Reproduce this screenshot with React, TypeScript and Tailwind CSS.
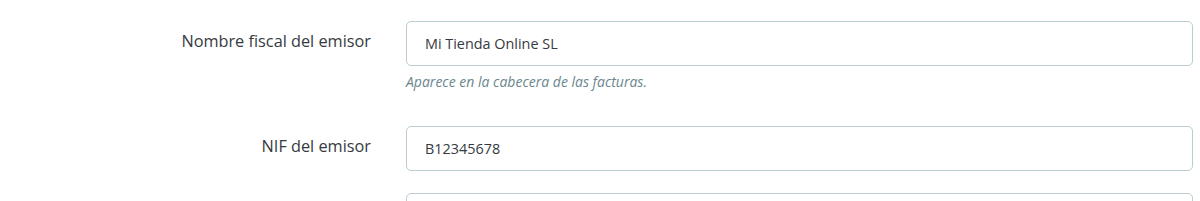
import React from "react";

function Row({ label, value, help }: { label: string; value: string; help?: string }) {
  return (
    <div className="flex items-start">
      <div className="w-[371px] shrink-0 pt-[8px] text-right text-[16.3px] leading-[24px] text-[#363a41]">
        {label}
      </div>
      <div className="ml-[35px] mr-[7px] flex-1">
        <div className="flex h-[45px] items-center rounded-[5px] border border-[#bbcdd2] bg-white pl-[18px] text-[14.4px] text-[#363a41]">
          {value}
        </div>
        {help && (
          <div className="mt-[6px] text-[14px] italic leading-[20px] text-[#6c868e]">{help}</div>
        )}
      </div>
    </div>
  );
}

export default function App() {
  return (
    <div
      className="h-[201px] w-[1200px] overflow-hidden bg-white pt-[21px]"
      style={{ fontFamily: '"Open Sans", "Noto Sans", sans-serif' }}
    >
      <Row label="Nombre fiscal del emisor" value="Mi Tienda Online SL" help="Aparece en la cabecera de las facturas." />
      <div className="h-[34px]" />
      <Row label="NIF del emisor" value="B12345678" />
      <div className="h-[22px]" />
      <Row label="" value="" />
    </div>
  );
}
